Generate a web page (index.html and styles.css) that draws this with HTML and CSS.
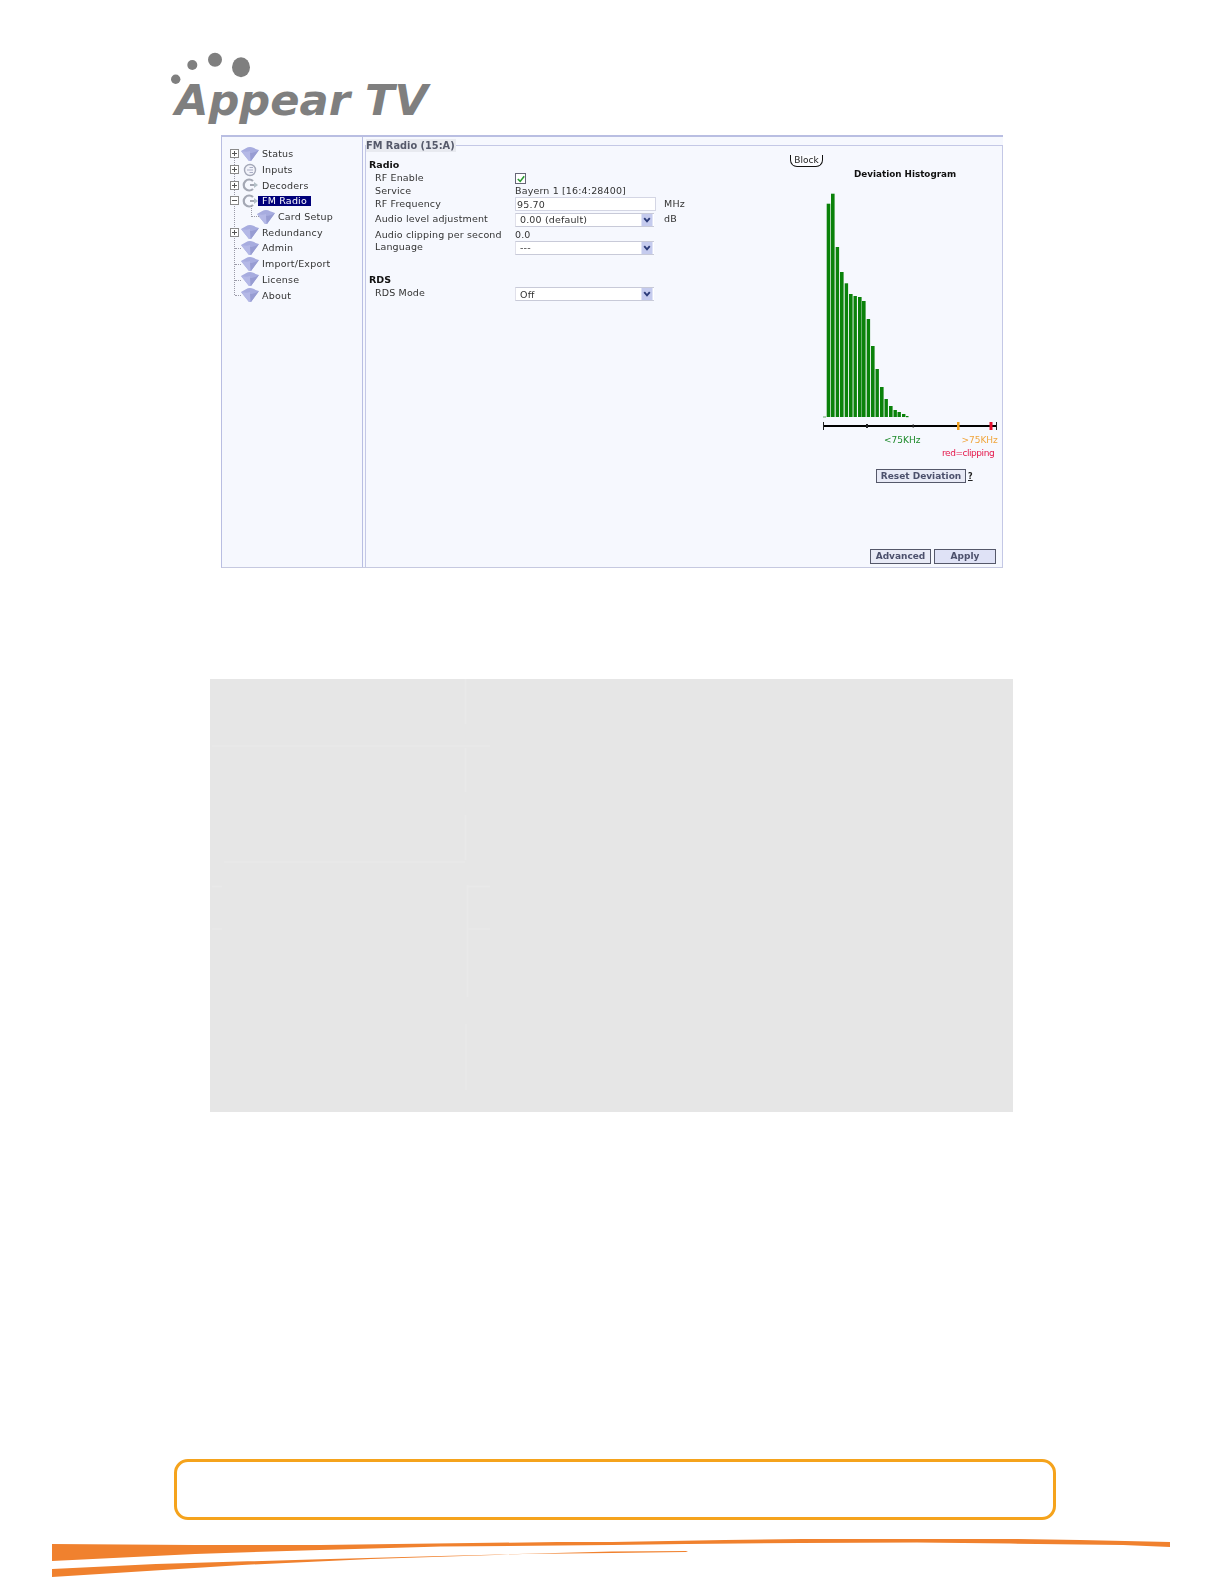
FILE: index.html
```html
<!DOCTYPE html>
<html lang="en">
<head>
<meta charset="utf-8">
<title>Appear TV - FM Radio</title>
<link rel="stylesheet" href="styles.css">
</head>
<body>
<svg class="defs" width="0" height="0" aria-hidden="true">
  <symbol id="i-node" viewBox="0 0 18 14">
    <path d="M0 4 C4 2 6 0 9 0 C12 0 14 2 18 3 L10 14 L8 14 Z" fill="#a7acdf"/>
    <path d="M0 4 C4 5 7 5 9 4 L9 14 L8 14 Z" fill="#b4b8e6"/>
    <path d="M18 3 C15 5 12 6 9 6 L10 14 Z" fill="#979cd2"/>
  </symbol>
  <symbol id="i-input" viewBox="0 0 14 14">
    <circle cx="7" cy="7" r="5.5" fill="#f2f3fa" stroke="#a4a8b8" stroke-width="1.4"/>
    <path d="M4 7 H10 M6.500 4.500 H10 M6.500 9.500 H10" stroke="#a8acc4" stroke-width="1" fill="none"/>
  </symbol>
  <symbol id="i-dec" viewBox="0 0 16 14">
    <path d="M11 3 A5.5 5.5 0 1 0 11 11" fill="none" stroke="#a4a8b4" stroke-width="2.2"/>
    <path d="M8 7 H13" stroke="#a4a8b4" stroke-width="2"/>
    <path d="M12 4 L16 7 L12 10 Z" fill="#b4c0c8"/>
  </symbol>
  <symbol id="i-plus" viewBox="0 0 9 9">
    <rect x=".5" y=".5" width="8" height="8" fill="#fff" stroke="#8a8a8a"/>
    <path d="M2 4.5 H7 M4.5 2 V7" stroke="#555"/>
  </symbol>
  <symbol id="i-minus" viewBox="0 0 9 9">
    <rect x=".5" y=".5" width="8" height="8" fill="#fff" stroke="#8a8a8a"/>
    <path d="M2 4.5 H7" stroke="#555"/>
  </symbol>
  <symbol id="i-arrow" viewBox="0 0 12 13">
    <rect width="12" height="13" fill="#c5cbee"/>
    <path d="M3 4.5 L6 8 L9 4.5" fill="none" stroke="#2a3a78" stroke-width="2"/>
  </symbol>
</svg>

<header class="logo">
  <svg class="logo-art" viewBox="0 0 300 135" width="300" height="135" role="img" aria-label="Appear TV">
    <circle cx="25.700" cy="79.300" r="4.700" fill="#7f7f7f"/>
    <circle cx="42.300" cy="65" r="5" fill="#7f7f7f"/>
    <circle cx="65" cy="59.700" r="7" fill="#7f7f7f"/>
    <ellipse cx="91" cy="67.300" rx="9" ry="10" fill="#7f7f7f"/>
    <text class="logo-text" x="25" y="115" textLength="253" lengthAdjust="spacingAndGlyphs">Appear TV</text>
  </svg>
</header>

<section class="panel">
  <nav class="tree">
    <div class="row root"><svg class="exp"><use href="#i-plus"/></svg><svg class="ico"><use href="#i-node"/></svg><span class="lbl">Status</span></div>
    <div class="row root"><svg class="exp"><use href="#i-plus"/></svg><svg class="ico"><use href="#i-input"/></svg><span class="lbl">Inputs</span></div>
    <div class="row root"><svg class="exp"><use href="#i-plus"/></svg><svg class="ico"><use href="#i-dec"/></svg><span class="lbl">Decoders</span></div>
    <div class="row root"><svg class="exp"><use href="#i-minus"/></svg><svg class="ico"><use href="#i-dec"/></svg><span class="lbl sel">FM Radio</span></div>
    <div class="row child"><svg class="ico"><use href="#i-node"/></svg><span class="lbl">Card Setup</span></div>
    <div class="row root"><svg class="exp"><use href="#i-plus"/></svg><svg class="ico"><use href="#i-node"/></svg><span class="lbl">Redundancy</span></div>
    <div class="row leaf"><svg class="ico"><use href="#i-node"/></svg><span class="lbl">Admin</span></div>
    <div class="row leaf"><svg class="ico"><use href="#i-node"/></svg><span class="lbl">Import/Export</span></div>
    <div class="row leaf"><svg class="ico"><use href="#i-node"/></svg><span class="lbl">License</span></div>
    <div class="row leaf"><svg class="ico"><use href="#i-node"/></svg><span class="lbl">About</span></div>
  </nav>

  <div class="main">
    <fieldset class="card">
      <legend class="card-title">FM Radio (15:A)</legend>
      <div class="card-body">
        <div class="form">
          <div class="head">Radio</div>
          <div class="lab">RF Enable</div>
          <div class="val"><span class="check"><svg viewBox="0 0 10 10" width="8" height="8"><path d="M1 5 L4 8 L9 1.500" fill="none" stroke="#2a9a30" stroke-width="2"/></svg></span></div>
          <div></div>
          <div class="lab">Service</div>
          <div class="val up">Bayern 1 [16:4:28400]</div>
          <div></div>
          <div class="lab">RF Frequency</div>
          <div class="val"><span class="text-in">95.70</span></div>
          <div class="unit up">MHz</div>
          <div class="lab">Audio level adjustment</div>
          <div class="val"><span class="sel-in"><span>0.00 (default)</span><svg class="arr"><use href="#i-arrow"/></svg></span></div>
          <div class="unit up">dB</div>
          <div class="lab flat">Audio clipping per second</div>
          <div class="val">0.0</div>
          <div></div>
          <div class="lab">Language</div>
          <div class="val"><span class="sel-in"><span>---</span><svg class="arr"><use href="#i-arrow"/></svg></span></div>
          <div></div>
          <div class="spacer"></div>
          <div class="head">RDS</div>
          <div class="lab more">RDS Mode</div>
          <div class="val"><span class="sel-in"><span>Off</span><svg class="arr"><use href="#i-arrow"/></svg></span></div>
          <div></div>
        </div>

        <div class="hist">
          <div class="block-btn">Block</div>
          <div class="hist-title">Deviation Histogram</div>
          <svg class="chart" viewBox="823 190 177 240" width="177" height="240">
            <g fill="#0a820a">
              <rect x="826.7" y="202.700" width="3.600" height="213.300"/>
              <rect x="831.000" y="192.700" width="3.600" height="223.300"/>
              <rect x="835.700" y="246" width="3.400" height="170"/>
              <rect x="840" y="271" width="3.600" height="145"/>
              <rect x="844.700" y="282.300" width="3.400" height="133.700"/>
              <rect x="849" y="293" width="3.600" height="123"/>
              <rect x="853.500" y="295" width="3.400" height="121"/>
              <rect x="858" y="296" width="3.600" height="120"/>
              <rect x="862" y="300" width="3.600" height="116"/>
              <rect x="866.700" y="318" width="3.400" height="98"/>
              <rect x="871" y="345" width="3.600" height="71"/>
              <rect x="875.500" y="368" width="3.400" height="48"/>
              <rect x="880" y="386" width="3.600" height="30"/>
              <rect x="884.500" y="398" width="3.400" height="18"/>
              <rect x="889" y="405" width="3.600" height="11"/>
              <rect x="893.500" y="409" width="3.400" height="7"/>
              <rect x="897.500" y="411" width="3.400" height="5"/>
              <rect x="902" y="413" width="3.400" height="3"/>
              <rect x="906" y="415" width="2.500" height="1.200"/>
            </g>
            <rect x="823" y="415.500" width="3" height="1" fill="#6aa86a"/>
            <rect x="823" y="424" width="174" height="2" fill="#000"/>
            <rect x="823" y="421" width="1" height="8" fill="#222"/>
            <rect x="996" y="421" width="1" height="8" fill="#222"/>
            <rect x="866" y="423" width="2" height="4" fill="#222"/>
            <rect x="912.500" y="423.500" width="1.500" height="3" fill="#222"/>
            <rect x="957" y="421" width="2.500" height="8" fill="#f0a020"/>
            <rect x="989.500" y="421" width="3" height="8" fill="#e81030"/>
          </svg>
          <div class="range"><span class="ok">&lt;75KHz</span><span class="warn">&gt;75KHz</span></div>
          <div class="clip">red=clipping</div>
          <div class="reset-row"><span class="btn reset">Reset Deviation</span><span class="help">?</span></div>
          <div class="actions"><span class="btn adv">Advanced</span><span class="btn apply">Apply</span></div>
        </div>
      </div>
    </fieldset>
  </div>
</section>

<section class="graybox">
  <svg class="faint" viewBox="210 679 803 433" width="803" height="433" aria-hidden="true">
    <g stroke="#e9e9e9" fill="none" stroke-width="1.500">
      <path d="M212 746 H490"/>
      <path d="M465.500 679 V724 M465.500 748 V792 M465.500 815 V860"/>
      <path d="M224 862 H465"/>
      <path d="M467.500 885 V997 M466 1024 V1090" />
      <path d="M212 886.500 H222 M468 886.500 H490 M212 929 H222 M468 929 H490"/>
    </g>
  </svg>
</section>

<aside class="notice"></aside>

<svg class="swoosh" viewBox="0 1536 1224 48" width="1224" height="48" aria-hidden="true">
  <path d="M52 1544 L195 1545 L320 1545 L558 1542 L612 1542 L725 1540 L803 1539 L1018 1539 L1080 1540 L1170 1542 L1170 1547 L1123 1545 L1010 1543.600 L917 1542.600 L800 1543 L686 1544 L612 1545 L441 1546.600 L320 1550 L195 1554 L52 1561 Z" fill="#f0812e"/>
  <path d="M52 1569 L156 1564 L312 1559.500 L441 1556 L612 1551.500 L688 1551 L686 1552 L612 1553 L523 1554 L371 1559 L242 1565 L52 1577 Z" fill="#f0812e"/>
</svg>
</body>
</html>
```

FILE: styles.css
```css
* { box-sizing: border-box; }
html, body { margin: 0; padding: 0; background: #fff; }
body { width: 1224px; height: 1584px; overflow: hidden; font-family: "DejaVu Sans", Verdana, sans-serif; font-size: 9.5px; color: #333; }
.defs { position: absolute; }

.logo { height: 135px; padding-left: 150px; }
.logo-art { display: block; }
.logo-text { font-family: "DejaVu Sans", sans-serif; font-weight: 700; font-style: italic; font-size: 43px; fill: #7f7f7f; }

.panel { display: flex; width: 782px; height: 433px; margin-left: 221px; background: #f6f8fe; border-top: 2px solid #b9bee2; border-left: 1px solid #b9bee2; border-bottom: 1px solid #c6c9e0; filter: blur(.3px); }

.tree { position: relative; width: 141px; flex: none; padding: 9px 0 0 8px; border-right: 1px solid #b9bee2; }
.tree::before { content: ""; position: absolute; left: 12px; top: 12px; height: 146px; border-left: 1px dotted #9a9aa8; }
.row { position: relative; display: flex; align-items: center; height: 15.700px; }
.exp { position: relative; width: 9px; height: 9px; flex: none; margin-right: 2px; }
.ico { width: 18px; height: 14px; flex: none; }
.lbl { margin-left: 3px; padding: 0 4px 0 0; letter-spacing: .2px; white-space: nowrap; }
.lbl.sel { margin-left: -1px; padding: 0 4px; height: 10px; line-height: 10px; width: 53px; background: #00007a; color: #fff; }
.child { padding-left: 27px; }
.child::before { content: ""; position: absolute; left: 21px; top: -3px; width: 7px; height: 10px; border-left: 1px dotted #9a9aa8; border-bottom: 1px dotted #9a9aa8; }
.child .lbl { margin-left: 3px; }
.leaf { padding-left: 11px; }
.leaf::before { content: ""; position: absolute; left: 5px; top: 8px; width: 6px; border-top: 1px dotted #9a9aa8; }
.leaf .lbl { margin-left: 3px; }

.main { flex: 1; padding: 2px 0 0 2px; min-width: 0; display: flex; }
.card { flex: 1; min-width: 0; margin: 0; padding: 0; border: 1px solid #c4c8e6; border-bottom: 0; display: flex; flex-direction: column; }
.card-title { padding: 0 1px 0 0; height: 13px; line-height: 13px; font-weight: 700; font-size: 9.800px; color: #55596a; background: #e8eaf0; }
.card-body { flex: 1; display: flex; min-height: 0; }

.form { flex: 1; padding: 6px 0 0 3px; display: grid; grid-template-columns: 146px 149px 1fr; grid-template-rows: 14px 13px 12px 14px 17px 12px 15px 18px 14px 14px; align-content: start; }
.head { grid-column: 1 / -1; font-weight: 700; color: #111; line-height: 14px; }
.spacer { grid-column: 1 / -1; }
.lab { padding-left: 6px; align-self: center; margin-bottom: 2px; letter-spacing: .15px; white-space: nowrap; }
.lab.flat { margin-bottom: 0; }
.lab.more { margin-bottom: 4px; }
.val { align-self: center; display: flex; white-space: nowrap; letter-spacing: .15px; }
.unit { align-self: center; letter-spacing: .2px; }
.up { margin-bottom: 2px; }
.check { display: flex; align-items: center; justify-content: center; width: 11px; height: 11px; background: #fff; border: 1px solid #667; }
.text-in { display: block; width: 141px; height: 14px; line-height: 13px; padding-left: 1px; background: #fff; border: 1px solid #d4d6e4; }
.sel-in { display: flex; justify-content: space-between; align-items: center; width: 139px; height: 14px; padding: 0 1px 0 4px; background: #fff; border-top: 1px solid #c8cad8; border-bottom: 1px solid #c8cad8; border-left: 1px solid #e0e0ea; }
.arr { width: 12px; height: 12px; flex: none; }

.hist { width: 211px; flex: none; display: flex; flex-direction: column; padding-top: 3px; }
.block-btn { width: 33px; height: 12px; margin-left: -1px; line-height: 10px; text-align: center; color: #222; font-size: 9px; border: 1px solid #111; border-top: 0; border-radius: 0 0 7px 7px; background: #fbfcff; }
.hist-title { margin: 1px 0 0 63px; height: 12px; line-height: 12px; font-weight: 700; font-size: 8.800px; color: #111; white-space: nowrap; }
.chart { display: block; margin: 11px 0 0 32px; }
.range { display: flex; gap: 41px; margin: 3px 0 0 93px; line-height: 12px; font-size: 9px; }
.ok { color: #1d8a2a; }
.warn { color: #f0a53c; }
.clip { margin: 1px 0 0 151px; line-height: 12px; font-size: 9px; letter-spacing: -.45px; color: #e5174a; white-space: nowrap; }
.reset-row { display: flex; align-items: center; margin: 10px 0 0 85px; }
.btn { display: block; text-align: center; font-weight: 700; font-size: 9px; color: #4c506c; border: 1px solid #55586a; background: #e8eaf6; white-space: nowrap; }
.reset { width: 90px; height: 14px; line-height: 12px; }
.help { margin-left: 2px; font-weight: 700; font-size: 8px; color: #222; text-decoration: underline; }
.actions { display: flex; gap: 3px; margin: auto 0 3px 79px; }
.adv { width: 61px; height: 15px; line-height: 13px; }
.apply { width: 62px; height: 15px; line-height: 13px; background: #dfe2f6; }

.graybox { width: 803px; height: 433px; margin: 111px 0 0 210px; background: #e6e6e6; }
.faint { display: block; }

.notice { width: 882px; height: 61px; margin: 347px 0 0 174px; border: 3px solid #f5a31c; border-radius: 14px; background: #fff; }

.swoosh { display: block; margin-top: 16px; }
```
